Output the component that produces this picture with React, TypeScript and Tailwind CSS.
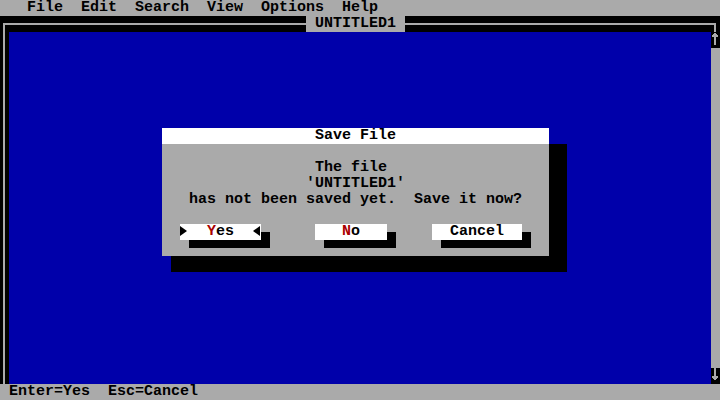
import type { ReactNode } from 'react'
import clsx from 'clsx'

// 80x25 text screen: one cell = 9px x 16px

function ArrowUp() {
  return (
    <svg viewBox="0 0 9 16" className="block h-4 w-[9px]" fill="#aaaaaa">
      <rect x="3" y="1" width="2" height="12" />
      <rect x="2" y="2" width="4" height="1" />
      <rect x="1" y="3" width="6" height="2" />
    </svg>
  )
}

function ArrowDown() {
  return (
    <svg viewBox="0 0 9 16" className="block h-4 w-[9px]" fill="#aaaaaa">
      <rect x="3" y="0" width="2" height="12" />
      <rect x="1" y="8" width="6" height="2" />
      <rect x="2" y="10" width="4" height="1" />
    </svg>
  )
}

function TriRight() {
  return (
    <svg viewBox="0 0 9 16" className="inline-block h-4 w-[9px] align-top">
      <polygon points="0,2 7,7 0,12" fill="#000" />
    </svg>
  )
}

function TriLeft() {
  return (
    <svg viewBox="0 0 9 16" className="inline-block h-4 w-[9px] align-top">
      <polygon points="8,2 1,7 8,12" fill="#000" />
    </svg>
  )
}

function DialogButton({ width, className, children }: { width: string; className?: string; children: ReactNode }) {
  return (
    <div className={className}>
      <div className="flex h-4">
        <div className={clsx('h-4 whitespace-pre bg-white', width)}>{children}</div>
        <div className="flex w-[9px] flex-col">
          <div className="h-2" />
          <div className="h-2 bg-black" />
        </div>
      </div>
      <div className="flex h-4">
        <div className="w-[9px]" />
        <div className={clsx('h-2 bg-black', width)} />
      </div>
    </div>
  )
}

export default function App() {
  return (
    <div className="relative flex h-[400px] w-[720px] flex-col overflow-hidden bg-black font-['Liberation_Mono',monospace] text-[15px] font-bold leading-4 text-black">
      {/* Menu bar */}
      <div className="h-4 whitespace-pre bg-[#aaaaaa]">{'   File  Edit  Search  View  Options  Help'}</div>

      {/* Window frame top */}
      <div className="flex h-4">
        <div className="flex w-[9px]">
          <div className="ml-[3px] mt-[7px] flex-1 border-l-2 border-t-2 border-[#aaaaaa]" />
        </div>
        <div className="w-[297px] pt-[7px]">
          <div className="h-[2px] bg-[#aaaaaa]" />
        </div>
        <div className="whitespace-pre bg-[#aaaaaa]">{' UNTITLED1 '}</div>
        <div className="flex-1 pt-[7px]">
          <div className="h-[2px] bg-[#aaaaaa]" />
        </div>
        <div className="flex w-[9px]">
          <div className="mr-[4px] mt-[7px] flex-1 border-r-2 border-t-2 border-[#aaaaaa]" />
        </div>
      </div>

      {/* Editor area */}
      <div className="flex flex-1">
        <div className="flex w-[9px]">
          <div className="ml-[3px] border-l-2 border-[#aaaaaa]" />
        </div>
        <div className="flex-1 bg-[#0000aa]" />
        <div className="flex w-[9px] flex-col">
          <div className="h-4 bg-black">
            <ArrowUp />
          </div>
          <div className="flex-1 bg-[#aaaaaa]" />
          <div className="h-4 bg-black">
            <ArrowDown />
          </div>
        </div>
      </div>

      {/* Status bar */}
      <div className="h-4 whitespace-pre bg-[#aaaaaa]">{' Enter=Yes  Esc=Cancel'}</div>

      {/* Save File dialog */}
      <div className="absolute left-[171px] top-[144px] h-[128px] w-[396px] bg-black" />
      <div className="absolute left-[162px] top-[128px] w-[387px] bg-[#aaaaaa]">
        <div className="h-4 bg-white text-center">Save File</div>
        <div className="h-4" />
        <div className="h-4 whitespace-pre pl-[153px]">The file</div>
        <div className="h-4 whitespace-pre pl-[144px]">'UNTITLED1'</div>
        <div className="h-4 whitespace-pre pl-[27px]">has not been saved yet.  Save it now?</div>
        <div className="h-4" />
        <div className="flex pl-[18px]">
          <DialogButton width="w-[81px]">
            <TriRight />
            {'  '}
            <span className="text-[#aa0000]">Y</span>
            {'es  '}
            <TriLeft />
          </DialogButton>
          <DialogButton width="w-[72px]" className="ml-[45px]">
            {'   '}
            <span className="text-[#aa0000]">N</span>
            {'o   '}
          </DialogButton>
          <DialogButton width="w-[90px]" className="ml-[36px]">
            {'  Cancel  '}
          </DialogButton>
        </div>
      </div>
    </div>
  )
}
